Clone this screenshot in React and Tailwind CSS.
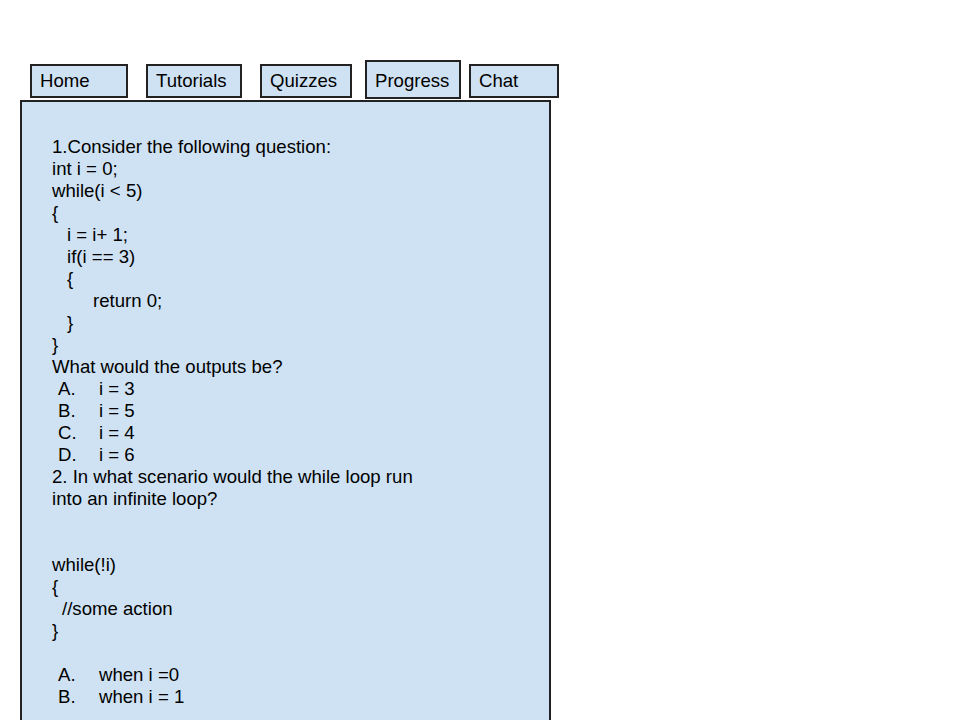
import React from "react";

const tabs = [
  { label: "Home", w: "w-[98px]", ml: "ml-0", tall: false },
  { label: "Tutorials", w: "w-[96px]", ml: "ml-[18px]", tall: false },
  { label: "Quizzes", w: "w-[92px]", ml: "ml-[18px]", tall: false },
  { label: "Progress", w: "w-[96px]", ml: "ml-[13px]", tall: true },
  { label: "Chat", w: "w-[90px]", ml: "ml-[8px]", tall: false },
];

function Option({ letter, text }) {
  return (
    <div className="flex">
      <span className="pl-[6px] w-[47px]">{letter}</span>
      <span>{text}</span>
    </div>
  );
}

export default function App() {
  return (
    <div className="w-[960px] h-[720px] overflow-hidden bg-white text-black font-['Liberation_Sans',Arial,sans-serif]">
      <div className="flex items-start h-[100px] pt-[60px] pl-[30px]">
        {tabs.map((t) => (
          <div
            key={t.label}
            className={`${t.w} ${t.ml} ${
              t.tall ? "h-[39px] pt-[8px]" : "mt-[4px] h-[34px] pt-[4px]"
            } border-2 border-[#222] bg-[#cfe2f3] pl-[8px] text-[18.6px] leading-[21px]`}
          >
            {t.label}
          </div>
        ))}
      </div>

      <div className="ml-[20px] w-[531px] h-[640px] border-2 border-[#222] bg-[#cfe2f3] pt-[34px] pl-[30px] text-[18.6px] leading-[22px]">
        <div>1.Consider the following question:</div>
        <div>int i = 0;</div>
        <div>while(i &lt; 5)</div>
        <div>{"{"}</div>
        <div className="pl-[15px]">i = i+ 1;</div>
        <div className="pl-[15px]">if(i == 3)</div>
        <div className="pl-[15px]">{"{"}</div>
        <div className="pl-[41px]">return 0;</div>
        <div className="pl-[15px]">{"}"}</div>
        <div>{"}"}</div>
        <div>What would the outputs be?</div>
        <Option letter="A." text="i = 3" />
        <Option letter="B." text="i = 5" />
        <Option letter="C." text="i = 4" />
        <Option letter="D." text="i = 6" />
        <div>2. In what scenario would the while loop run</div>
        <div>into an infinite loop?</div>
        <div className="h-[44px]" />
        <div>while(!i)</div>
        <div>{"{"}</div>
        <div className="pl-[10px]">//some action</div>
        <div>{"}"}</div>
        <div className="h-[22px]" />
        <Option letter="A." text="when i =0" />
        <Option letter="B." text="when i = 1" />
      </div>
    </div>
  );
}
